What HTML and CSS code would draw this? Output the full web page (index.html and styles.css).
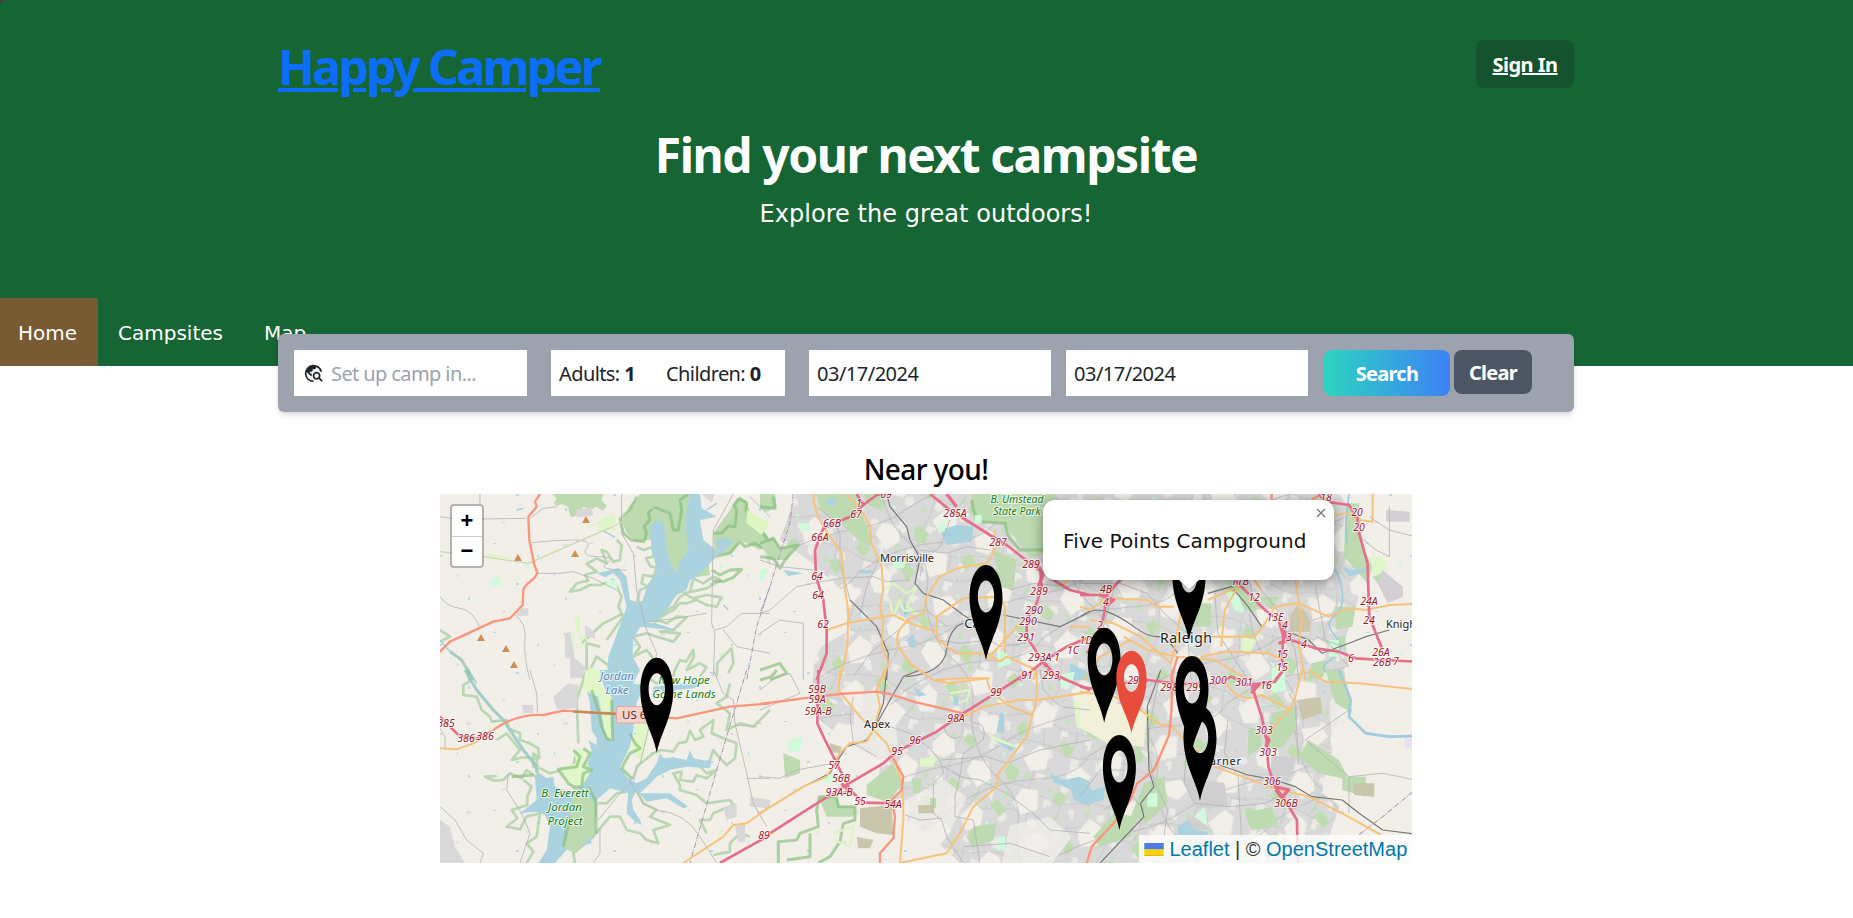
FILE: index.html
```html
<!DOCTYPE html>
<html lang="en">
<head>
<meta charset="utf-8">
<title>Happy Camper</title>
<link rel="stylesheet" href="styles.css">
</head>
<body>
<header class="hero">
  <div class="topbar">
    <a class="brand" href="#">Happy Camper</a>
    <a class="signin" href="#">Sign In</a>
  </div>
  <div class="intro">
    <h1 class="headline">Find your next campsite</h1>
    <p class="tagline">Explore the great outdoors!</p>
  </div>
  <nav class="nav">
    <a class="nav-link active" href="#">Home</a>
    <a class="nav-link" href="#">Campsites</a>
    <a class="nav-link" href="#">Map</a>
  </nav>
</header>

<form class="search">
  <div class="field place">
    <svg class="globe" viewBox="0 0 24 24"><path d="M19.3 16.9c.4-.7.7-1.5.7-2.4 0-2.5-2-4.5-4.5-4.5S11 12 11 14.500s2 4.500 4.500 4.500c.9 0 1.700-.3 2.400-.7l3.200 3.200 1.400-1.400-3.200-3.200zm-3.800.1a2.500 2.500 0 1 1 0-5 2.500 2.500 0 0 1 0 5zM12 20v2A10 10 0 1 1 21.840 10h-2.070A8 8 0 0 0 15 4.600V5c0 1.100-.9 2-2 2h-2v2c0 .550-.450 1-1 1H8v2h2v3H9l-4.790-4.790C4.080 10.790 4 11.380 4 12c0 4.410 3.590 8 8 8z"/></svg>
    <span class="hint">Set up camp in...</span>
  </div>
  <div class="field guests"><span>Adults: <b>1</b></span><span>Children: <b>0</b></span></div>
  <div class="field date first">03/17/2024</div>
  <div class="field date second">03/17/2024</div>
  <button class="btn go" type="button">Search</button>
  <button class="btn clear" type="button">Clear</button>
</form>

<main class="nearby">
  <h2 class="nearby-title">Near you!</h2>
  <div class="map">
    <svg class="tiles" viewBox="440 494 972 369">
      <defs>
        <pattern id="town" width="83" height="71" patternUnits="userSpaceOnUse" patternTransform="rotate(14)">
          <rect width="83" height="71" fill="#dad9d9"/>
          <path fill="#eceae5" d="M3 4h6v5h3v5H6v-3H3zM31 2h9v3h-3v4h-6zM58 9l6-2 3 5-4 4-5-2zM17 29l6-2 2 6-5 3-3-3zM45 25h7v6h-4v3h-3zM71 30h6v9h-3v-4h-3zM3 50l7-2 3 6-5 5-4-2zM34 48h6l3 6-4 3-6-3zM61 51h8v4h-3v6h-5z"/>
          <path fill="#c8dfbd" d="M20 3l5 2-2 6-4-2zM48 13l4 2-2 4-5-1zM4 27l4-2 2 7-5 2zM58 38l6 2-3 4-5-2zM21 56l4-2 2 6-5 3z"/>
          <path fill="#cdf5d9" d="M67 22h3v3h-3zM27 20h4v2h-4zM76 61h3v3h-3z"/>
          <path stroke="#bdbdc1" stroke-width=".6" fill="none" d="M0 20q20-5 40 3t43-3M28 0q-3 20 2 40t-2 31M0 45q30-5 50 2t33-2M60 23q5 10-3 24"/>
          <path fill="#aad3df" d="M52 3h3v1h-3zM10 39h3v1h-3zM72 46h2v2h-2zM40 66h3v1h-3z"/>
        </pattern>
        <pattern id="lots" width="149" height="127" patternUnits="userSpaceOnUse" patternTransform="rotate(-21)">
          <path fill="#f2efe9" d="M8 12l14-6 8 10-4 12-12 2-8-8zM60 4l18 4 4 12-14 6-10-9zM112 20l16-8 9 14-12 14-16-5zM30 50l10-8 14 8-4 16-16 3zM88 58l20-6 6 10-9 15-15-4zM8 90l18-8 5 12-10 16-13-5zM62 96l14-10 14 8-8 18-17-2zM122 88l14-4 8 16-16 10-10-8z"/>
          <path fill="#c0ddb2" d="M38 20l8-5 5 10-8 6zM92 28l9-4 3 10-12 4zM6 56l9-6 5 12-9 6zM66 62l8-4 6 11-8 8-7-5zM126 58l8 1 3 12-10 3zM40 90l9-3 4 14-9 4zM100 106l10-4 4 10-12 5z"/>
          <path stroke="#b3b3b8" stroke-width=".8" fill="none" d="M0 36q40 10 70 2t79-2M54 0q-12 40 4 70t-4 57M0 80q50-12 90 2t59-2"/>
        </pattern>
        <pattern id="rural" width="97" height="89" patternUnits="userSpaceOnUse">
          <path fill="#b5dce8" d="M8 9h3v1H8zM52 21h2v2h-2zM31 49h3v2h-3zM80 63h2v3h-2zM17 77h3v1h-3zM69 40h1v3h-1z"/>
          <path fill="#e2e1de" d="M78 10h5v3h-5z"/>
          <path fill="#d9f4d8" d="M40 31l3-2 1 4-3 1z"/>
        </pattern>
        <g id="pin"><path fill-rule="evenodd" d="M0 0C-3-15-9-25-13-39Q-16.500-52-16.500-62C-16.500-82-9-95 0-95S16.500-82 16.500-62Q16.500-52 13-39C9-25 3-15 0 0ZM0-79.500C-4.600-79.500-8.200-72.500-8.200-63.500S-4.600-47.500 0-47.500 8.200-54.500 8.200-63.500 4.600-79.500 0-79.500Z"/></g>
      </defs>

      <rect x="440" y="494" width="972" height="369" fill="#f2efe9"/>
      <rect x="440" y="494" width="972" height="369" fill="url(#rural)"/>
      <path fill="url(#town)" d="M796 494H1350L1342 530 1362 560 1358 600 1345 640 1352 690 1330 740 1345 790 1320 863H960L935 840 900 815 878 790 880 760 850 745 820 720 812 690 815 650 850 630 842 590 808 560 780 540Z"/>
      <path fill="url(#lots)" d="M796 494H1350L1342 530 1362 560 1358 600 1345 640 1352 690 1330 740 1345 790 1320 863H960L935 840 900 815 878 790 880 760 850 745 820 720 812 690 815 650 850 630 842 590 808 560 780 540Z"/>
      <path fill="#f2efe9" opacity=".75" d="M800 620l18-5 8 25-12 20-14 2zM855 700l20-12 18 20 5 35-22 30-24-20zM905 800l40-20 22 18-18 35-35 10zM1010 825l40-8 22 20-20 26h-50zM1330 700l35-12 20 40-15 40-38-10z"/>

      <!-- woodland, western half -->
      <g transform="translate(440 490) scale(.3333)">
        <path class="wood" d="M335 12H490L485 30 500 48 488 62 470 50 455 58 430 50 415 70 400 82 390 78 385 50 365 42 350 48 342 40 350 25ZM545 90L570 45 600 12H770L740 80 745 180 700 255 650 170 630 150 590 155 560 130ZM870 60L890 25 920 30 930 70 985 140 960 180 900 150 875 190 825 195 820 130ZM765 235L805 205 810 255 770 262Z"/>
        <path class="edge" d="M540 85L550 130 575 150 612 155 620 130 612 110 630 90 625 70 640 50 690 70 700 120 715 120 725 60 720 30 745 12M820 130L845 130 865 108 885 110 890 60 882 45 900 25 920 40 918 60 930 90 960 120 985 150 970 175 945 160 915 170 900 155 870 190 820 200M815 240L840 255 870 240 905 238 880 262 850 275 818 272"/>
        <path class="edge soft" d="M540 85L570 60 590 20M530 150L545 165 540 210 520 215 500 185 485 180 500 220 470 205 440 222 470 245 435 255 445 272 410 280 390 305 420 300 450 285 480 285 520 270 545 320 535 350 550 380 500 450M590 170L610 180 640 170 640 200 618 205 632 230 650 232 640 260 610 255 605 280 625 290 600 300 590 340 640 330M620 390L650 395 680 360 700 350 720 320 750 305 760 265 790 280 820 260 842 270 800 295 730 310 760 325 800 315 845 322 830 350 800 345 770 330 740 340 720 340 700 360 680 370 650 390 680 400 710 380 740 382 700 420 660 425 720 430 700 455 650 440 620 430 580 440 600 470 580 500 620 480 640 505M700 560L705 540 720 510 738 515 760 480 762 500 740 540 780 520 800 532 780 560M830 560L832 520 850 500 875 475 880 520 865 550M0 420L30 440 0 455M425 460L490 400 550 370M480 470L440 460 440 560 470 500 510 530"/>
        <path class="water" d="M750 12H780L785 55 830 80 780 90 790 150 840 190 770 260 750 270 740 300 710 315 680 360 650 390 620 395 700 420 640 415 600 410 580 450 578 500 600 540 580 580H500L505 500 550 380 560 350 540 270 520 250 495 262 470 250 535 235 560 260 570 330 605 340 615 310 625 280 650 245 645 215 635 180 630 110 650 90 672 100 678 170 690 220 705 250 720 215 745 180 735 90ZM825 150L860 145 880 155 840 195Z"/>
        <path fill="#def6c0" d="M920 60l70 40-25 35-45-35zM440 580l10-50 30 20-10 30z"/>
        <path fill="#ddf5c8" d="M405 375h15v50h-12zM480 90l40-20 10 30-60 25zM140 190l50 10-30 5z"/>
        <path class="golf thin" d="M388 430L400 425 400 475 425 470 420 435 445 450M140 190L160 200 190 198 210 208M450 110L490 90 500 120 530 115"/>
        <path fill="#d9d8d8" d="M235 355h30v22h-35zM375 430l15-5 15 80 30 25v35h-45v-60h-15zM435 405l30 20v20l-30-5zM410 60l45-8 5 25-50 5zM785 12h40l-10 25zM970 190l20 15v25z"/>
        <path fill="#cffbdc" d="M155 265l22-8 10 32h-35zM500 270h28l5 30-35-10zM960 240l25-5-10 35h-15z"/>
        <path class="edge" d="M30 485L65 510 100 570"/>
        <path class="stream" d="M0 450L20 475 50 500 80 530 110 580M850 345l15 15M230 60l20-5M490 122l35 20M800 60l30-20M640 400l60 20"/>
      </g>
      <g transform="translate(440 670) scale(.3333)">
        <path class="edge soft" d="M85 0L88 35 70 45 70 75 110 80 125 120 150 140 155 155 200 150 205 175 240 190 240 210 270 220 295 235 298 265 280 250 280 290 300 295 330 310 400 290 410 240M170 210L200 190 220 215 240 240 215 270 250 262 290 265 295 325 260 300 245 325 210 310 190 330 160 332 135 320 170 318M250 330L275 350 262 380 262 405 215 420 232 445 200 470 240 478 260 440 300 430 290 500 260 520 280 545 260 579M440 0L410 90 415 220M475 400L500 400 530 370 590 360 610 400 650 420 630 440 690 465 640 480 655 520 620 510 600 490 560 480 540 440 510 440 480 475 460 500 400 550 405 579M580 330L590 290 640 250 665 240 700 245 715 220 740 215 750 182 765 210 790 200 780 180 820 150 815 190 850 205 890 220 885 265 860 285 840 265 820 240 810 270 780 290 800 310 830 300 800 325 770 315 760 335 720 330 725 305 700 310 720 345 720 360 770 375 800 400 870 390 880 405 820 430 810 450 780 450 800 490M870 40L860 80 830 100 870 130 860 180 900 160 940 170 990 120M820 555L870 545 870 520 900 490 930 500M510 20L540 40M620 20L650 40 700 30"/>
        <path class="water" d="M475 0H590L575 40 610 45 590 100 580 180 570 230 540 290 560 320 590 340 620 325 650 280 660 250 670 265 700 262 740 270 750 240 760 265 815 275 810 295 740 290 690 300 650 320 620 350 600 370 690 370 745 410 730 415 680 385 620 395 590 360 575 390 580 420 600 450 605 465 585 455 560 430 565 370 510 355 470 390 470 440 440 450 455 520 380 540 345 579H295L320 540 330 470 315 435 290 425 240 430 290 390 285 320 300 310 320 325 340 320 345 350 400 370 440 320 440 290 455 240 445 210 470 225 470 205 455 180 450 100 440 60 480 70 500 200 520 220 510 100ZM640 50l160-15-40 20-120 12z"/>
        <path fill="#e1f7c7" d="M435 0H480L485 50 515 80 515 215 495 190 475 80 430 60ZM580 165L625 160 620 240 600 275 570 230 590 200ZM355 295L410 280 400 240 445 235 430 270 455 300 425 350 395 345Z"/>
        <path class="wood" d="M400 350L440 370 465 400 465 490 400 550 370 530 390 450Z"/>
        <path class="edge" d="M455 60L475 120 485 170 500 205 518 212 515 90M570 190L585 220 600 235 570 250 555 275 545 295 575 325M445 350L468 395 468 490M370 530L390 440M400 240L420 260 410 290 355 298 385 340 400 350 425 350 430 310 455 300 430 290 450 250 430 235"/>
        <path fill="#d9d8d8" d="M340 80L385 40 415 45 410 115 350 118ZM245 105h35v25h-30zM0 450L30 470 45 530 75 579H0ZM850 415l40-15v40l-30 10zM930 380l60 10v25l-60-5zM885 470l30-15v60h-20z"/>
        <path class="edge" d="M75 0L110 60 160 120 190 150 250 240 290 290M215 320L280 315"/>
        <path class="stream" style="stroke-width:6" d="M75 0L110 60 160 120 190 150 250 240 285 280 290 310"/>
      </g>

      <!-- woodland and ponds, central strip -->
      <g transform="translate(760 490) scale(.3333)">
        <path class="wood" d="M170 12H290L310 80 340 170 300 155 230 90 180 60ZM0 12H45L50 50 20 65 0 55ZM310 12H380L355 55 325 45ZM635 12H890V180L810 205 740 110 720 95 660 100 635 60ZM700 180L770 210 760 300 720 290ZM0 160L40 140 60 180 110 160 80 210 30 210Z"/>
        <path class="edge" d="M0 160L40 145 60 175 115 165 75 210 60 235 40 205 0 200M655 95L640 60 635 30M0 540L60 520 80 550 30 570M0 50L45 55 40 20M655 95L735 100 745 140 780 180 850 180"/>
        <path class="water" d="M540 120L590 105 640 110 635 155 560 165ZM190 35l40-15-10 30zM440 450l20-20 10 40-15 5zM70 240l60 10-45 8zM300 240h35v10h-35zM430 340l12 5v35h-10zM930 520l60 30v20h-60z"/>
        <path class="golf" d="M370 300L400 280 440 310 470 290 440 350 470 370 430 360 420 330 400 380 390 330"/>
        <path fill="#cffbdc" d="M120 100h30v20h-30zM535 105l20-20v40h-15zM710 480l30 10 15 30-40 15zM645 75h20v25h-20zM400 210l40 5-10 20h-30z"/>
      </g>
      <g transform="translate(760 670) scale(.3333)">
        <path class="wood" d="M320 345L400 280 425 340 400 380 380 395 320 375ZM175 380H230L240 410 285 410 280 440 200 440ZM70 250l50 20v40l-45 15zM455 325h30l-5 45h-20zM510 385h18v30h-18zM620 500l20-30 70-10-10 50-60 25z"/>
        <path class="edge" d="M0 30L35 20 50 0M175 380H230L235 410 285 410 285 450 250 460 240 515 210 560 175 579M55 579V515L110 510 120 490 175 470 170 420 178 380M80 570L150 560 150 490"/>
        <path fill="#c9c6ab" d="M300 415L395 405 400 495 350 490 300 470ZM475 405h45v25h-45zM290 500l50 10-10 25h-35zM210 220l35 10-5 20-30-5z"/>
        <path class="golf" d="M570 70L630 60 620 90 590 100 570 80M220 490L280 470 270 530 220 510"/>
        <path fill="#def6c8" d="M480 265l55-5-15 30h-40zM680 190l95 40-10 10-60-20zM940 90l50 10v90l-40-20z"/>
        <path class="water" d="M870 310L910 330 960 320 990 335V410L940 390 935 360 880 335ZM720 130h12v60l-22-5zM580 80h15v25h-15zM700 210l70 25-20 8zM460 50l40 25-25 5z"/>
        <path fill="#cffbdc" d="M80 215l50-20-10 50h-30zM710 500h25v40h-25zM895 15l50-10-10 40-30 10zM200 310h30l-10 30h-30z"/>
      </g>

      <!-- woodland and lakes, eastern side -->
      <g transform="translate(1080 490) scale(.3363 .3333)">
        <path class="wood" d="M790 40h40l10 130 30 60-15 50-70-80zM420 300l60-20 60 70-30 20-60-50zM350 340h40v70h-50zM760 350h60l-10 60-50 10zM530 320h60l-20 40zM690 520l40-10-5 50-50 10zM870 260l30-20 20 30-20 30z"/>
        <path fill="#def6c8" d="M860 200h40l15 40-40 20zM480 440l45 10-20 40-25-10z"/>
        <path fill="#d2d0d2" d="M900 240l60 50v30l-45 20-30-60zM620 370l40-20 30 30-10 45-60-5zM910 60l70 5v30h-70z"/>
        <path fill="#c9c6ab" d="M625 380l20-35 25 20 15 30v30h-60z"/>
        <path class="water" d="M780 230l30 10 40-5v10l-50 15z"/>
        <path class="stream" style="stroke-width:5" d="M800 12L790 100 795 160M755 235Q775 260 780 310T755 380 760 440 745 510 775 570"/>
        <path fill="#cffbdc" d="M570 530h40v50h-40zM430 300l40 10 20 60-30-10zM740 450h30v50h-30z"/>
      </g>
      <g transform="translate(1080 670) scale(.3363 .3333)">
        <path fill="#f2f0d9" d="M0 60L110 100 200 130 190 230 80 220 0 170Z"/>
        <path fill="#f2efe9" d="M800 0H996V200L850 210 800 100ZM740 250H996V500L830 450 720 370Z"/>
        <path class="wood" d="M570 130l70-20 5 60-40 60-50 20zM680 210l90 60 30 60-90-20-60-50zM190 340l60-20 10 80-60 60-50-20zM100 430l70 10-20 60-90 30-20-30zM500 180l40-10v60l-40 30zM730 0h50l30 130-50-30zM490 430l80-20 20 60-80 10zM780 320h70v60l-70-20z"/>
        <path fill="#c9c6ab" d="M645 90l70-10 5 50-60 20zM815 340h60v40l-60-5z"/>
        <path fill="#d0ced1" d="M570 255l70 10-15 55-60-5zM300 320l130 20 10 70-90 5zM320 440h60v40h-60z"/>
        <path class="water" d="M0 340L40 360 75 350 70 390 30 400 0 380ZM290 470l30-20 20 30 40 5v10h-90z"/>
        <path class="stream" style="stroke-width:8" d="M770 0L790 50 805 90 800 140 850 190 920 200 996 198"/>
        <path fill="#cffbdc" d="M560 40l40-30 15 50-40 10zM340 440l30-30 10 60zM200 370h30v40h-30z"/>
        <path fill="#eadff0" d="M965 205h31v30h-31z"/>
      </g>

      <!-- minor roads and railways -->
      <g transform="translate(440 490) scale(.3333)"><path class="minor" d="M120 12V42M0 80L60 88 260 85M275 158Q340 150 400 150T440 175 475 200 500 220 560 240M270 85L310 55 350 50M290 250L360 250 400 245 460 265 530 300M0 320Q20 350 60 355T120 415M225 375Q260 400 255 450T270 570M545 12L545 130 580 190 590 300 620 420 650 490 640 540M880 12L820 120 815 400 825 430 820 560M620 395L710 385 800 370M990 370L905 370 860 410 825 420M850 420L890 470 990 490M990 80L930 20"/><path class="track" d="M0 185L130 200 265 220 540 100 680 30"/><path class="bound" d="M990 290L950 410 920 570"/></g>
      <g transform="translate(440 670) scale(.3333)"><path class="minor" d="M270 0L290 70 293 130M0 175L15 200V235M205 310L200 360 245 430 270 490 240 579M0 410L45 450 80 510 130 550 120 579M480 475V550L460 579M570 340L540 370 475 450M630 160L600 280 570 335 610 400 650 420Q740 430 780 500L830 579M820 0L850 70 880 90 885 160 920 310 940 400 980 470M920 325H990M885 165L950 170"/><path class="bound" d="M920 0L830 300 750 579"/></g>
      <g transform="translate(760 490) scale(.3333)"><path class="minor" d="M0 370L30 360 110 290 160 280 240 265 340 260 380 275 450 270M170 50L220 90 240 130 240 220 270 330 350 410 385 490M160 240L60 230 0 210M130 570L130 400 60 390 0 430M300 370L320 290 360 200M480 180L560 190 620 170 690 180M440 400L330 490 280 560M560 410L500 360 430 370M530 450L600 460 690 450 720 470 800 460M480 260L490 210 540 170 570 90M750 300L820 280 920 290"/><path class="rail" d="M380 12L390 50 440 110 450 150 480 205 465 280 490 310 550 330 610 375 650 400M270 330L350 410 385 490 380 570M730 375L900 410 990 365M610 400Q570 410 560 480T440 560"/><path class="bound" d="M100 12L90 100 60 190 30 290 0 370"/></g>
      <g transform="translate(760 670) scale(.3333)"><path class="minor" d="M0 60L50 20 90 10 120 70 0 120M0 320L60 325 110 300 220 280M280 80L270 140 280 220 350 260M360 160L450 190 510 235 545 280 550 310 520 340 520 430 545 450 560 500 610 579M545 270L680 260 740 280 840 240 990 210M550 290L600 320 660 330 740 370 820 430 870 480 990 490M600 320L585 380V440L640 450 660 579M640 130Q620 160 650 160T670 210L610 250 600 320M550 170Q570 220 600 200M435 435L480 450 545 445M840 0L850 60 900 110 990 120M610 530L750 520 870 560"/><path class="rail" d="M380 0L370 100 340 180 320 210 260 230 240 260 210 310 130 350 0 430M480 0L430 20 390 90 340 180"/></g>
      <g transform="translate(1080 490) scale(.3363 .3333)"><path class="minor" d="M0 280H120L200 310 250 370 320 430 330 570M100 300L60 440 120 530M400 300L410 430 500 570M530 290L580 350 640 480 650 570M860 80L920 120 996 140M920 50L920 200 880 180 820 130M700 290L730 450 800 530M700 440L780 470"/><path class="rail" d="M0 380Q40 350 80 365T160 410 230 440 290 490M380 310L450 290 500 350 540 410M630 430L680 450 720 490 800 460 850 440 920 420"/></g>
      <g transform="translate(1080 670) scale(.3363 .3333)"><path class="minor" d="M0 380L60 300 130 300M240 0L220 100 200 220 220 330 260 420 250 500M320 150L310 340 340 400 450 410 550 400 590 380M440 150L430 250 470 320 480 500M650 280L640 100 620 70M800 120L670 210 800 320 900 310 950 320 996 330M800 320L800 430M70 420L150 370 190 420"/><path class="rail" d="M240 0L200 110 205 300 220 350 180 400 190 440 60 579M400 280L500 315 580 330 640 350 690 380 780 390 830 430 900 480 996 492"/><path class="bound" d="M830 494L900 440 996 360"/></g>

      <!-- secondary, primary and motorway roads -->
      <g transform="translate(440 490) scale(.3333)"><path class="primary" d="M300 12L285 35 290 50 265 80 268 150 282 220 292 250Q285 265 270 275T250 300L248 345 210 385 160 395 30 455 0 485"/></g>
      <g transform="translate(440 670) scale(.3333)"><path class="secondary" d="M0 235L50 238 100 220 160 180M730 579L850 500 880 465 920 460 990 410"/><path class="primary" d="M160 180Q230 130 310 135L370 122 600 135 710 145 870 110 990 100"/><path d="M400 125L530 132" stroke="#bf8a56" stroke-width="7"/><path class="motorway" d="M0 140L60 200 110 205 155 185M840 579L990 495"/></g>
      <g transform="translate(760 490) scale(.3333)"><path class="secondary" d="M160 12Q160 60 190 110L245 190 255 300 265 360 262 470 240 570M260 12L310 70 330 110 335 160 365 230 370 300 360 350 370 400 365 470 385 520 370 570M200 420L260 400 400 375 450 400 530 425 535 450 590 490 680 490 720 515 740 500 830 540 820 570M440 390L490 370 500 320 540 260 590 235 680 220 700 190 705 120M530 425V380L610 325 720 320 735 350V490M450 390Q400 420 415 470L450 520 520 570M930 410L990 410M900 290L940 260 990 240M530 570L600 565 690 565M680 510L780 400"/><path class="motorway" d="M390 12L350 15 310 45 270 80 190 115 165 180 168 260 190 330 200 420 200 490 170 570M290 12L310 45M510 12L570 60 690 135 740 165 810 220 880 270 930 300 990 315M840 230L845 290 830 340 800 390 800 440 845 510M780 570L850 515 920 470 990 440M850 515L900 570"/><path class="ramp" d="M560 12L590 50M820 215L850 250 835 290M845 510L860 530"/></g>
      <g transform="translate(760 670) scale(.3333)"><path class="secondary" d="M0 430L130 350 200 320 240 250 270 220 320 215 340 180 380 220 400 265M240 0L235 60 300 140 340 180M375 0L350 60 360 110 340 180M400 260L410 290 425 340 430 400 430 450 420 579M480 0L520 30 570 40 680 25 690 60 750 110 810 132 815 130M610 140L670 110 780 90 830 90 900 80 990 65M830 0L830 90 800 200 740 280 715 310 710 350 640 410 600 490 560 550 420 579"/><path class="primary" d="M0 102L130 85 240 72 350 65 390 72 460 95 610 130M400 265L430 320 425 360 395 390 405 440 400 505 360 550V579"/><path class="motorway" d="M175 0L172 160 195 210 240 300 270 360 310 398 410 400M30 490L100 445 250 350 370 280 410 245 480 210 530 185 610 130 690 80 800 10M860 0L920 30 990 60"/><path class="ramp" d="M245 340L270 365 250 370"/></g>
      <g transform="translate(1080 490) scale(.3363 .3333)"><path class="secondary" d="M0 350L30 360 80 325 200 330 230 350 280 350M270 270L310 310 280 480 270 520 180 440 100 400 30 390M380 330L470 290 510 260 540 300M420 470L430 360 470 290M350 440L450 440 520 440 550 400 580 350 650 340 740 380 800 355 850 360 920 345 996 342M640 270L660 390 650 460 670 570M360 500L430 485 560 490 600 510M130 440L200 480 290 500 400 510 500 570M740 80L790 70 830 90 870 95 870 12M10 570L60 500 150 450"/><path class="primary" d="M570 12V28M690 28L720 12M290 500L270 570"/><path class="motorway" d="M0 315H80L110 280 120 270M80 320L70 380 50 450 20 490M460 270L500 310 550 360 590 390 605 440 600 500 605 540 580 570M600 440L700 475 770 485 820 505 900 510 996 515M710 12L730 35 800 45 825 85 830 130 855 220 860 380 900 480"/><path class="ramp" d="M60 315L100 330 75 350M600 410L620 450 590 460"/></g>
      <g transform="translate(1080 670) scale(.3363 .3333)"><path class="secondary" d="M0 65L100 80 180 120 240 165 270 165 320 220 400 290 580 355 680 380 780 430 895 495M430 30Q450 70 480 80T540 75L625 120 640 80 660 0M625 120L590 150 555 210M680 0L730 35 830 40 996 58"/><path class="primary" d="M275 0L272 120 265 195 220 300 170 340 150 390 100 460 35 530 20 579"/><path class="motorway" d="M0 50L30 55 200 30 300 42 410 40 450 20 500 45 580 35 605 0M510 45L540 140 555 210 560 290 580 350 610 390 645 450 648 579"/><path class="ramp" d="M500 45L530 45 510 70M550 195L562 210 552 230M580 350L620 360 600 382 582 360"/></g>

      <g class="peaks"><path d="M582 523l4-7 4 7zM514 561l4-7 4 7zM571 557l4-7 4 7zM477 641l4-7 4 7zM502 652l4-7 4 7zM510 668l4-7 4 7z"/></g>
      <g class="road-no">
        <text x="446" y="727">385</text><text x="466" y="742">386</text><text x="485" y="740">386</text><text x="764" y="839">89</text>
        <text x="859" y="507">1</text><text x="856" y="518">67</text><text x="886" y="498">69</text><text x="832" y="527">66B</text><text x="820" y="541">66A</text><text x="817" y="580">64</text><text x="818" y="599">64</text><text x="823" y="628">62</text><text x="955" y="517">285A</text><text x="998" y="546">287</text><text x="1031" y="568">289</text><text x="1039" y="595">289</text><text x="1034" y="614">290</text><text x="1028" y="625">290</text><text x="1026" y="641">291</text><text x="1044" y="661">293A 1</text><text x="1073" y="654">1C</text><text x="1027" y="679">91</text><text x="1051" y="679">293</text>
        <text x="817" y="693">59B</text><text x="817" y="703">59A</text><text x="818" y="715">59A-B</text><text x="834" y="769">57</text><text x="841" y="782">56B</text><text x="839" y="796">93A-B</text><text x="860" y="805">55</text><text x="893" y="808">54A</text><text x="897" y="755">95</text><text x="915" y="744">96</text><text x="956" y="722">98A</text><text x="996" y="696">99</text>
        <text x="1106" y="593">4B</text><text x="1106" y="606">4</text><text x="1100" y="629">2</text><text x="1086" y="644">1D</text><text x="1240" y="585">11B</text><text x="1254" y="601">12</text><text x="1275" y="621">13E</text><text x="1285" y="629">4</text><text x="1289" y="641">3</text><text x="1304" y="648">4</text><text x="1282" y="658">15</text><text x="1282" y="671">15</text><text x="1326" y="501">18</text><text x="1357" y="516">20</text><text x="1359" y="531">20</text><text x="1369" y="605">24A</text><text x="1369" y="624">24</text><text x="1381" y="656">26A</text><text x="1382" y="666">26B</text><text x="1396" y="665">7</text><text x="1351" y="662">6</text><text x="1136" y="684">295</text><text x="1169" y="691">298</text><text x="1195" y="691">299</text><text x="1218" y="684">300</text><text x="1244" y="686">301</text><text x="1266" y="689">16</text><text x="1264" y="734">303</text><text x="1268" y="756">303</text><text x="1272" y="785">306</text><text x="1286" y="807">306B</text>
      </g>
      <g class="town">
        <text x="907" y="562" textLength="54">Morrisville</text><text x="877" y="728" textLength="26">Apex</text><text x="978" y="628" style="font-size:13px">Cary</text><text x="1186" y="643" style="font-size:14px" textLength="52">Raleigh</text><text x="1221" y="765" textLength="40">Garner</text><text x="1386" y="628" style="text-anchor:start">Knightdale</text>
      </g>
      <g class="park"><text x="1017" y="503" style="font-size:10.500px">B. Umstead</text><text x="1017" y="515" style="font-size:10.500px">State Park</text><text x="684" y="684">New Hope</text><text x="684" y="698">Game Lands</text><text x="565" y="797">B. Everett</text><text x="565" y="811">Jordan</text><text x="565" y="825">Project</text></g>
      <g class="lake"><text x="617" y="680">Jordan</text><text x="617" y="694">Lake</text></g>
      <rect x="616.500" y="706.500" width="44" height="16.500" rx="2" fill="#f4d4cd" stroke="#e6a597"/><text class="shield" x="622" y="719">US 64</text>

      <use href="#pin" x="986" y="660"/><use href="#pin" x="656.800" y="752.700"/><use href="#pin" x="1189" y="640"/><use href="#pin" x="1104.200" y="722.700"/>
      <use href="#pin" fill="#e84c3d" transform="translate(1131.500 733) scale(.92 .865)"/>
      <use href="#pin" x="1192" y="751"/><use href="#pin" x="1200" y="800.700"/><use href="#pin" x="1119.400" y="830"/>
    </svg>
    <div class="zoom"><span>+</span><span>−</span></div>
    <div class="popup"><span class="popup-text">Five Points Campground</span><svg class="close" viewBox="0 0 10 10"><path d="M1 1l8 8M9 1L1 9"/></svg><svg class="tip" viewBox="0 0 20 10"><path d="M0 0h20L10 9z"/></svg></div>
    <div class="credit"><svg class="flag" viewBox="0 0 12 8"><path fill="#4c7be1" d="M0 0h12v4H0z"/><path fill="#ffd500" d="M0 4h12v3H0z"/><path fill="#e0bc00" d="M0 7h12v1H0z"/></svg><a href="#">Leaflet</a><span>| ©</span><a href="#">OpenStreetMap</a></div>
  </div>
</main>
</body>
</html>
```

FILE: styles.css
```css
* { box-sizing: border-box; }
body { margin: 0; background: #fff; color: #212529; font-family: "Noto Sans", "Open Sans", sans-serif; font-size: 20px; overflow: hidden; }

.hero { height: 366px; display: flex; flex-direction: column; color: #fff; background: radial-gradient(circle at 6px 6px, transparent 6px, #4a3a44 6.500px) 0 0 / 6px 6px no-repeat, #166534; }
.topbar { width: 1296px; height: 128px; margin: 0 0 0 278px; padding-top: 40px; display: flex; justify-content: space-between; align-items: flex-start; flex: none; }
.brand { margin-top: -1px; color: #0d6efd; font-size: 48px; font-weight: 700; line-height: 56px; letter-spacing: -2.500px; text-decoration: underline; text-decoration-thickness: 4px; text-underline-offset: 3px; }
.signin { width: 98px; height: 48px; border-radius: 8px; background: #14532d; color: #fff; font-weight: 700; line-height: 49px; text-align: center; letter-spacing: -.5px; }
.intro { height: 170px; padding-right: 1px; text-align: center; }
.headline { margin: 0; font-size: 48px; line-height: 54px; letter-spacing: -1.450px; }
.tagline { margin: 17px 0 0; font-family: "DejaVu Sans", sans-serif; font-size: 24px; line-height: 30px; letter-spacing: .05px; }
.nav { display: flex; height: 68px; font-family: "DejaVu Sans", sans-serif; }
.nav-link { color: #fff; text-decoration: none; line-height: 70px; padding: 0 22px 0 20px; }
.nav-link + .nav-link + .nav-link { padding-left: 19px; }
.nav-link.active { width: 98px; padding: 0 0 0 18px; background: #785a33; }

.search { position: relative; width: 1296px; height: 78px; margin: -32px 0 0 278px; padding: 16px; display: flex; background: #9ca3af; border-radius: 6px; box-shadow: 0 4px 6px -1px rgba(0,0,0,.12), 0 2px 4px -2px rgba(0,0,0,.12); }
.field { height: 46px; background: #fff; display: flex; align-items: center; font-size: 20px; letter-spacing: -.6px; white-space: nowrap; }
.place { width: 233px; padding-left: 9px; }
.globe { width: 21px; height: 21px; fill: #212529; }
.hint { margin-left: 7px; color: #9ca3af; }
.guests { width: 234px; margin-left: 24px; padding-left: 8px; gap: 31px; }
.date { width: 242px; padding-left: 8px; letter-spacing: -.5px; }
.first { margin-left: 24px; }
.second { margin-left: 15px; }
.btn { border: 0; border-radius: 8px; color: #fff; font: 700 20px "Noto Sans", sans-serif; letter-spacing: -.7px; padding: 0; }
.go { width: 126px; height: 46px; margin-left: 16px; background: linear-gradient(90deg, #2dd4bf, #3b82f6); }
.clear { width: 78px; height: 44px; margin-left: 4px; background: #4b5563; }

.nearby { width: 972px; margin-left: 440px; }
.nearby-title { margin: 41px 0 0; height: 41px; text-align: center; font-size: 28px; font-weight: 500; line-height: 33px; color: #000; letter-spacing: -.6px; }
.map { position: relative; width: 972px; height: 369px; overflow: hidden; }
.tiles { display: block; width: 972px; height: 369px; font-family: "Noto Sans", sans-serif; }
.tiles path { stroke-linejoin: round; }
.wood { fill: #bddab1; }
.edge { fill: none; stroke: #83be7b; stroke-opacity: .65; stroke-width: 9; }
.edge.soft { stroke-opacity: .5; stroke-width: 8; }
.water { fill: #aad3df; }
.stream { fill: none; stroke: #9dccdc; stroke-width: 4; }
.golf { fill: none; stroke: #dcf5c2; stroke-width: 7; }
.golf.thin { stroke-width: 5; }
.minor { fill: none; stroke: #b4b3b6; stroke-width: 2.500; }
.rail { fill: none; stroke: #777; stroke-width: 3.500; }
.track { fill: none; stroke: #cbd9ac; stroke-width: 4; }
.bound { fill: none; stroke: #ac90b0; stroke-width: 3; stroke-dasharray: 16 4 3 4; }
.secondary { fill: none; stroke: #f7c37b; stroke-width: 6; }
.primary { fill: none; stroke: #fb967c; stroke-width: 7; }
.motorway { fill: none; stroke: #e66e89; stroke-width: 8; }
.ramp { fill: none; stroke: #e66e89; stroke-width: 10; }
.peaks { fill: #d08f55; }
.tiles text { paint-order: stroke; stroke: rgba(255,255,255,.75); stroke-width: 2px; text-anchor: middle; }
.road-no { font-size: 10.500px; font-style: italic; fill: #9f1729; }
.town { font-size: 11px; fill: #222; }
.park { font-size: 11.500px; font-style: italic; fill: #128012; }
.lake { font-size: 11.500px; font-style: italic; fill: #5486b8; }
.tiles .shield { font-size: 11.500px; fill: #6b2b20; stroke: none; text-anchor: start; }

.zoom { position: absolute; left: 10px; top: 10px; width: 34px; border: 2px solid rgba(0,0,0,.25); border-radius: 4px; background: #fff; background-clip: padding-box; color: #000; font: 700 22px/30px "Liberation Sans", sans-serif; text-align: center; }
.zoom span { display: block; height: 30px; }
.zoom span + span { border-top: 1px solid #ccc; line-height: 28px; }
.popup { position: absolute; left: 603px; top: 6px; width: 291px; height: 80px; border-radius: 12px; background: #fff; color: #111; box-shadow: 0 3px 14px rgba(0,0,0,.4); }
.popup-text { display: block; padding-left: 20px; font: 20px/82px "DejaVu Sans", sans-serif; letter-spacing: .08px; white-space: nowrap; }
.close { position: absolute; right: 8px; top: 8px; width: 10px; height: 10px; fill: none; stroke: #757575; stroke-width: 1.200; }
.tip { position: absolute; left: 136px; top: 80px; width: 20px; height: 10px; fill: #fff; }
.credit { position: absolute; right: 0; bottom: 0; height: 28px; width: 273px; padding: 0 4px 0 5px; display: flex; align-items: center; gap: 5.500px; background: rgba(255,255,255,.8); color: #333; font: 20px/28px "Liberation Sans", sans-serif; white-space: nowrap; }
.credit a { color: #0078a8; text-decoration: none; }
.flag { width: 20px; height: 13px; }
```
